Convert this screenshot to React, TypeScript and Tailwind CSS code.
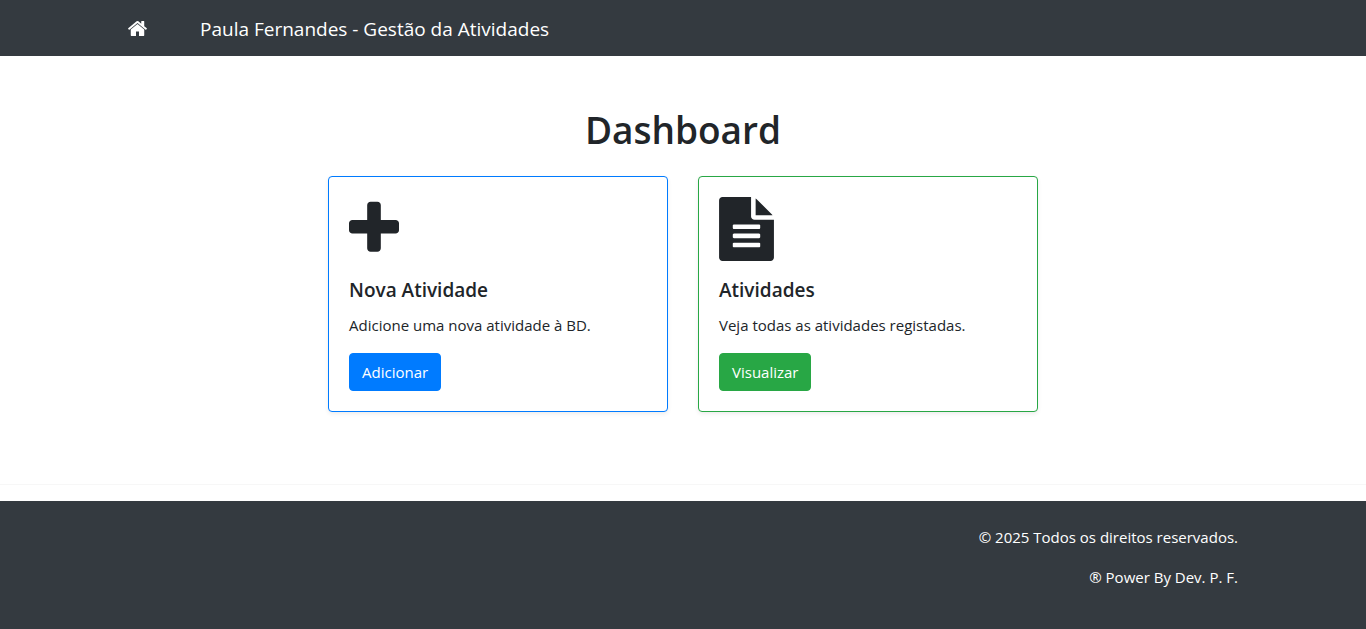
import React from "react";

function HomeIcon() {
  return (
    <svg viewBox="90 253 1612 1283" className="h-[15px] w-[19px]" fill="currentColor" aria-hidden="true">
      <path d="M1472 992v480q0 26-19 45t-45 19h-384v-384h-256v384h-384q-26 0-45-19t-19-45v-480q0-1 .5-3t.5-3l575-474 575 474q1 2 1 6zm223-69l-62 74q-8 9-21 11h-3q-13 0-21-7l-692-577-692 577q-12 8-24 7-13-2-21-11l-62-74q-8-10-7-23.5t11-21.5l719-599q32-26 76-26t76 26l244 204v-195q0-14 9-23t23-9h192q14 0 23 9t9 23v408l219 182q10 8 11 21.5t-7 23.5z" />
    </svg>
  );
}

function PlusIcon() {
  return (
    <svg viewBox="192 64 1408 1792" className="h-16 w-[50px]" fill="currentColor" aria-hidden="true">
      <path d="M1600 800v192q0 40-28 68t-68 28h-416v416q0 40-28 68t-68 28h-192q-40 0-68-28t-28-68v-416h-416q-40 0-68-28t-28-68v-192q0-40 28-68t68-28h416v-416q0-40 28-68t68-28h192q40 0 68 28t28 68v416h416q40 0 68 28t28 68z" />
    </svg>
  );
}

function FileTextIcon() {
  return (
    <svg viewBox="128 0 1536 1792" className="h-16 w-[55px]" fill="currentColor" aria-hidden="true">
      <path d="M1596 476q14 14 28 36h-472v-472q22 14 36 28zm-476 164h544v1056q0 40-28 68t-68 28h-1344q-40 0-68-28t-28-68v-1600q0-40 28-68t68-28h800v544q0 40 28 68t68 28zm160 736v-64q0-14-9-23t-23-9h-704q-14 0-23 9t-9 23v64q0 14 9 23t23 9h704q14 0 23-9t9-23zm0-256v-64q0-14-9-23t-23-9h-704q-14 0-23 9t-9 23v64q0 14 9 23t23 9h704q14 0 23-9t9-23zm0-256v-64q0-14-9-23t-23-9h-704q-14 0-23 9t-9 23v64q0 14 9 23t23 9h704q14 0 23-9t9-23z" />
    </svg>
  );
}

interface CardProps {
  icon: React.ReactNode;
  title: string;
  text: string;
  action: string;
  borderClass: string;
  buttonClass: string;
}

function Card({ icon, title, text, action, borderClass, buttonClass }: CardProps) {
  return (
    <section className={`flex flex-col items-start rounded border bg-white p-5 shadow-[0_2px_4px_rgba(0,0,0,0.075)] ${borderClass}`}>
      {icon}
      <h2 className="mt-4 text-[19px] leading-[26px] font-semibold">{title}</h2>
      <p className="mt-2.5 text-[15px] leading-6">{text}</p>
      <a href="#" className={`mt-4 rounded border px-3 py-1.5 text-[15px] leading-6 text-white ${buttonClass}`}>
        {action}
      </a>
    </section>
  );
}

export default function App() {
  return (
    <div className="flex min-h-screen flex-col bg-white font-['Open_Sans','Noto_Sans',sans-serif] text-[#212529]">
      <header className="bg-[#343a40] text-white">
        <nav className="mx-auto flex h-14 max-w-[1140px] items-center px-[15px]">
          <a href="#" aria-label="Início" className="mr-[53px]">
            <HomeIcon />
          </a>
          <a href="#" className="pt-0.5 text-[19px] leading-[30px]">
            Paula Fernandes - Gestão da Atividades
          </a>
        </nav>
      </header>

      <main className="mx-auto w-full max-w-[740px] px-[15px] pt-12 pb-[72px]">
        <h1 className="mb-5 text-center text-[37px] leading-[52px] font-semibold">Dashboard</h1>
        <div className="grid gap-[30px] sm:grid-cols-2">
          <Card
            icon={<PlusIcon />}
            title="Nova Atividade"
            text="Adicione uma nova atividade à BD."
            action="Adicionar"
            borderClass="border-[#007bff]"
            buttonClass="border-[#007bff] bg-[#007bff]"
          />
          <Card
            icon={<FileTextIcon />}
            title="Atividades"
            text="Veja todas as atividades registadas."
            action="Visualizar"
            borderClass="border-[#28a745]"
            buttonClass="border-[#28a745] bg-[#28a745]"
          />
        </div>
      </main>

      <hr className="mb-4 border-[#f7f7f7]" />

      <footer className="grow bg-[#343a40] text-white">
        <div className="mx-auto flex w-full max-w-[1140px] flex-col gap-4 px-[15px] pt-6 pb-10 text-right text-[15px] leading-6">
          <p>© 2025 Todos os direitos reservados.</p>
          <p>® Power By Dev. P. F.</p>
        </div>
      </footer>
    </div>
  );
}
